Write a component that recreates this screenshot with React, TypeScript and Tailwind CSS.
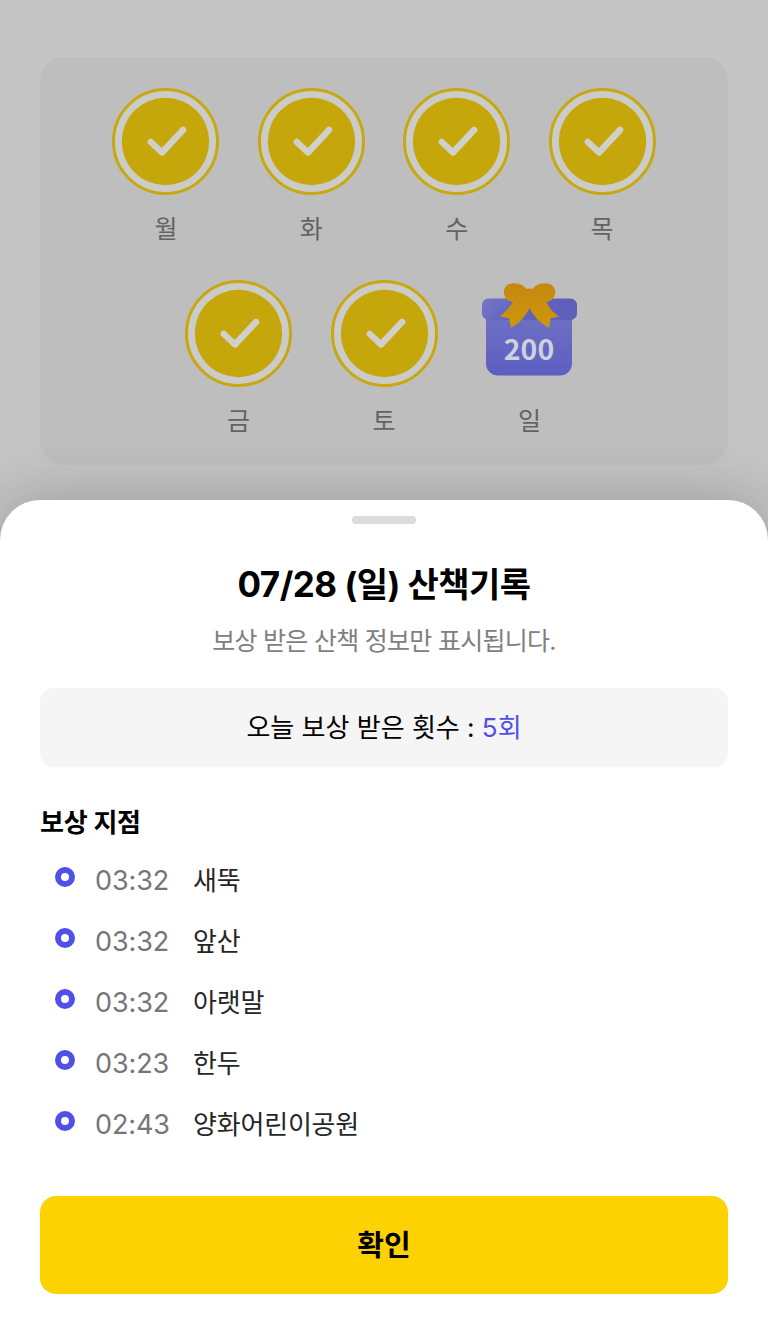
import React from 'react';

const FirstWeek = ['월', '화', '수', '목']
const SecondWeek = ['금', '토']

const Points = [
  { time: '03:32', name: '새뚝' },
  { time: '03:32', name: '앞산' },
  { time: '03:32', name: '아랫말' },
  { time: '03:23', name: '한두' },
  { time: '02:43', name: '양화어린이공원' },
]

function CheckIcon() {
  return (
    <svg className="block size-[107px]" viewBox="0 0 107 107" fill="none">
      <circle cx="53.5" cy="53.5" r="52" fill="#cbcbc9" stroke="#c7a80f" strokeWidth="3" />
      <circle cx="53.5" cy="53.5" r="43.7" fill="#c5a60b" />
      <path d="M38.8 54L50 64.5L71 42" stroke="#d0cfc8" strokeWidth="6.500" strokeLinecap="round" strokeLinejoin="round" />
    </svg>
  )
}

function GiftIcon() {
  return (
    <svg className="block size-[107px]" viewBox="0 0 107 107">
      <defs>
        <linearGradient id="box" x1="0" y1="0" x2="0" y2="1">
          <stop offset="0" stopColor="#6f72c3" />
          <stop offset="1" stopColor="#5d5ec2" />
        </linearGradient>
        <linearGradient id="lid" x1="0" y1="0" x2="1" y2="0.25">
          <stop offset="0" stopColor="#7578c5" />
          <stop offset="0.5" stopColor="#6163bf" />
          <stop offset="1" stopColor="#5d5fba" />
        </linearGradient>
        <linearGradient id="bow" x1="0" y1="0" x2="0" y2="1">
          <stop offset="0" stopColor="#c7870e" />
          <stop offset="1" stopColor="#cd970c" />
        </linearGradient>
      </defs>
      <path d="M10 30H96V83.500A12 12 0 0 1 84 95.500H22A12 12 0 0 1 10 83.500Z" fill="url(#box)" />
      <rect x="6" y="18.500" width="95" height="21.500" rx="6.500" fill="url(#lid)" />
      <path d="M30.500 19C25.500 13 27.500 3.200 38 3.200C45 3.200 48.500 6.500 50.500 9Q53.500 8 56.500 9C58.500 6.500 62 3.200 69 3.200C79.500 3.200 82 13 76.500 19C74.500 21.500 72 21 70.500 22.500L76 31L83 36.500L74.500 38.500L73 47.700C64.500 43.500 58 37 53.500 28.300C49 37 43.500 43.500 35 47.700L33 38.500L24 36.500L30 31L37 22.500C35 21 32.500 21.500 30.500 19Z" fill="url(#bow)" />
      <text x="53" y="79.500" textAnchor="middle" fontSize="28.500" fontWeight="700" fill="#ccd1de" fontFamily="'Noto Sans CJK KR', sans-serif">200</text>
    </svg>
  )
}

function Day({ label, children }: { label: string, children: React.ReactNode }) {
  return (
    <div className="flex flex-col items-center">
      {children}
      <div className="mt-[15px] h-[39px] text-[25px] leading-[39px] text-[#636363]">{label}</div>
    </div>
  )
}

export default function App() {
  return (
    <div className="flex h-[1324px] w-[768px] flex-col overflow-hidden bg-[#c4c4c4] font-[Inter,'Noto_Sans_CJK_KR',sans-serif]">
      <div className="h-[500px] px-10 pt-[57px]">
        <div className="flex h-[408px] flex-col gap-[31.500px] rounded-[24px] bg-[#bebebe] pt-[30.500px]">
          <div className="flex justify-center gap-[38.400px]">
            {FirstWeek.map((day) => (
              <Day key={day} label={day}><CheckIcon /></Day>
            ))}
          </div>
          <div className="flex justify-center gap-[38.400px]">
            {SecondWeek.map((day) => (
              <Day key={day} label={day}><CheckIcon /></Day>
            ))}
            <Day label="일"><GiftIcon /></Day>
          </div>
        </div>
      </div>

      <div className="flex grow flex-col rounded-t-[40px] bg-white px-10 pt-4 shadow-[0_0_60px_rgba(0,0,0,0.22)]">
        <div className="h-2 w-16 shrink-0 self-center rounded-full bg-[#dcdcdc]" />
        <h1 className="mt-[34px] h-[52px] whitespace-nowrap text-center text-[35px] font-bold leading-[52px] text-black">
          <span className="tracking-[-0.5px]">07/28 </span><span className="text-[34px] tracking-[-0.5px]">(일) 산책기록</span>
        </h1>
        <p className="mt-[11px] h-[40px] whitespace-nowrap text-center text-[25px] leading-[40px] tracking-[-0.72px] text-[#808080]">보상 받은 산책 정보만 표시됩니다.</p>
        <div className="mt-[27px] h-[79px] rounded-[14px] bg-[#f5f5f5] text-center text-[26px] leading-[79px] text-black">
          오늘 보상 받은 횟수 : <span className="text-[#4f50e6]">5회</span>
        </div>

        <h2 className="mt-[36px] h-[40px] text-[26px] font-bold leading-[40px] tracking-[-0.2px] text-black">보상 지점</h2>
        <div className="mt-[6px] flex flex-col">
          {Points.map((point, i) => (
            <div key={i} className="flex h-[61px] items-center pl-[15px]">
              <div className="mb-[6px] size-5 rounded-full border-[6px] border-[#4f50e8] bg-white" />
              <div className="ml-5 w-[98px] pt-[3px] text-[27px] font-normal tracking-[-0.1px] text-[#767676]">{point.time}</div>
              <div className="pt-px text-[26px] tracking-[-0.2px] text-[#262626]">{point.name}</div>
            </div>
          ))}
        </div>

        <button className="mt-[42px] h-[98px] w-full rounded-[16px] bg-[#fdd203] pt-[2px] text-[29px] font-bold text-black">확인</button>
      </div>
    </div>
  )
}
